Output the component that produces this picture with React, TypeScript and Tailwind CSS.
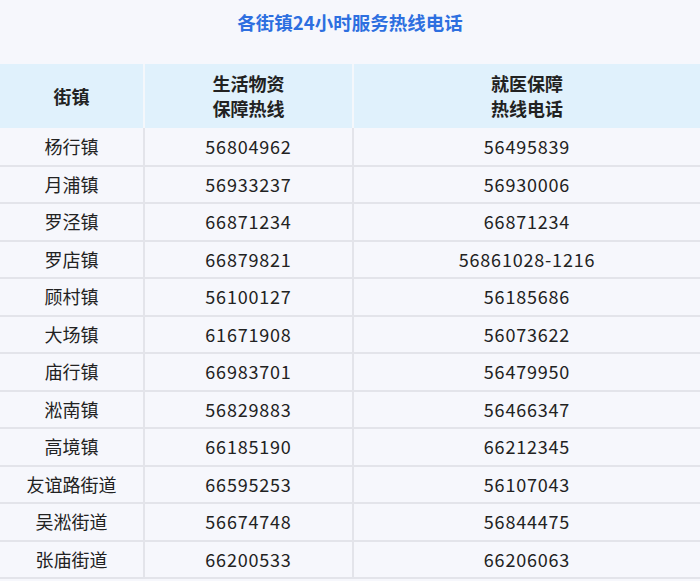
const rows = [
  ["杨行镇","56804962","56495839"],["月浦镇","56933237","56930006"],["罗泾镇","66871234","66871234"],
  ["罗店镇","66879821","56861028-1216"],["顾村镇","56100127","56185686"],["大场镇","61671908","56073622"],
  ["庙行镇","66983701","56479950"],["淞南镇","56829883","56466347"],["高境镇","66185190","66212345"],
  ["友谊路街道","66595253","56107043"],["吴淞街道","56674748","56844475"],["张庙街道","66200533","66206063"],
];
export default function App() {
  return (
    <div className="w-[700px] h-[581px] bg-[#f6f7fc] overflow-hidden" style={{fontFamily:'"Noto Sans CJK SC", "Noto Sans", sans-serif'}}>
      <div className="h-[45px] flex items-center justify-center text-[#2d6fe0] text-[18.5px] font-bold">各街镇24小时服务热线电话</div>
      <div className="h-[19px]" />
      <table className="w-full border-collapse text-[#222] text-[18px]">
        <colgroup><col className="w-[144px]"/><col className="w-[209px]"/><col/></colgroup>
        <thead>
          <tr className="bg-[#e0f1fc] h-[64px]">
            <th className="font-bold border-r-2 border-[#f4f7fb] leading-[25px]">街镇</th>
            <th className="font-bold border-r-2 border-[#f4f7fb] leading-[25px]">生活物资<br/>保障热线</th>
            <th className="font-bold leading-[25px]">就医保障<br/>热线电话</th>
          </tr>
        </thead>
        <tbody>
          {rows.map((r,i)=>(
            <tr key={i} className="h-[37.5px] border-b-2 border-[#e3e4ea]">
              <td className="text-center border-r-2 border-[#e3e4ea]">{r[0]}</td>
              <td className="text-center border-r-2 border-[#e3e4ea] font-['Liberation_Sans',sans-serif] tracking-[0.8px]">{r[1]}</td>
              <td className="text-center font-['Liberation_Sans',sans-serif] tracking-[0.8px]">{r[2]}</td>
            </tr>
          ))}
        </tbody>
      </table>
    </div>
  );
}
